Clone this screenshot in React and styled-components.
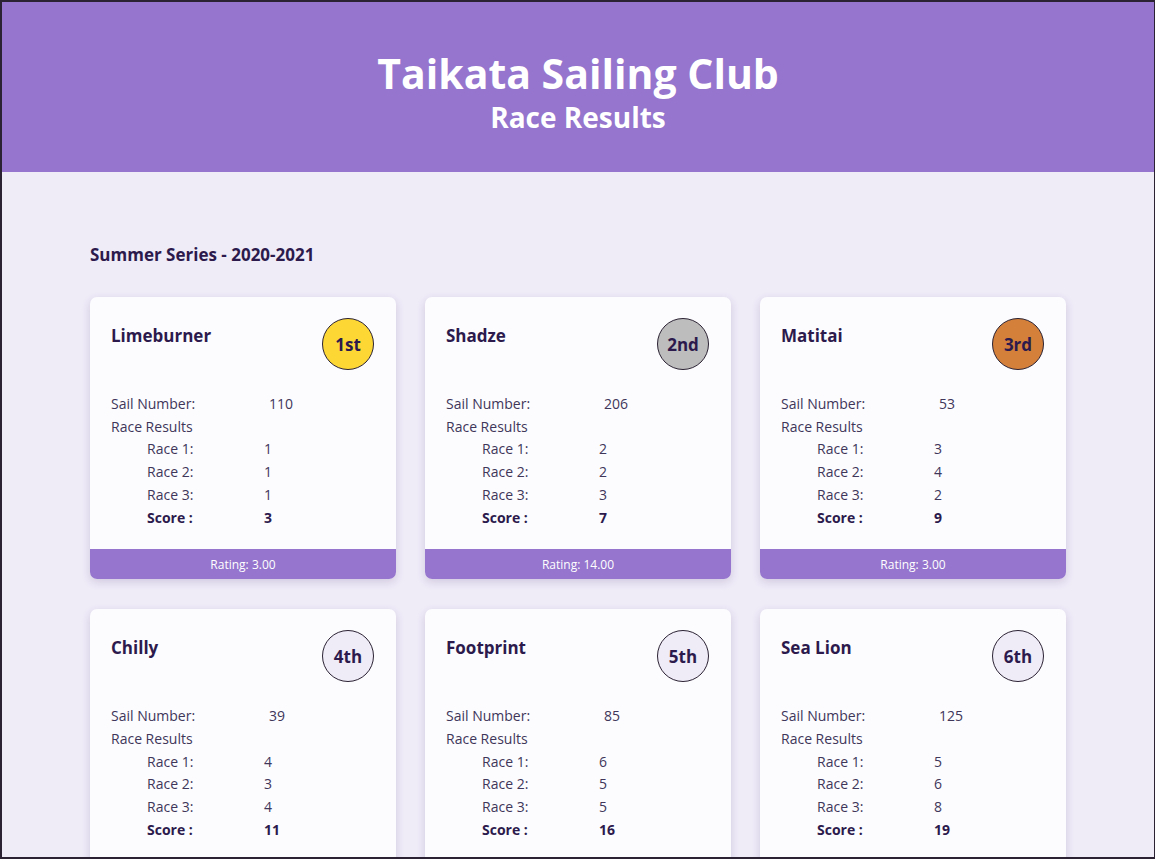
import styled, { createGlobalStyle } from "styled-components";

const GlobalStyle = createGlobalStyle`
  * { box-sizing: border-box; }
  html, body { margin: 0; padding: 0; }
  body {
    font-family: "Open Sans", "Noto Sans", sans-serif;
    color: #2c1a4d;
    background: #2b2233;
  }
`;

const boats = [
  { name: "Limeburner", place: "1st", sail: 110, races: [1, 1, 1], score: 3, rating: "3.00" },
  { name: "Shadze", place: "2nd", sail: 206, races: [2, 2, 3], score: 7, rating: "14.00" },
  { name: "Matitai", place: "3rd", sail: 53, races: [3, 4, 2], score: 9, rating: "3.00" },
  { name: "Chilly", place: "4th", sail: 39, races: [4, 3, 4], score: 11, rating: "3.00" },
  { name: "Footprint", place: "5th", sail: 85, races: [6, 5, 5], score: 16, rating: "3.00" },
  { name: "Sea Lion", place: "6th", sail: 125, races: [5, 6, 8], score: 19, rating: "3.00" },
];

const medal = {
  "1st": "#fdd835",
  "2nd": "#bdbdbd",
  "3rd": "#d4803a",
};

const Frame = styled.div`
  position: fixed;
  inset: 0;
  border-style: solid;
  border-color: #2b2233;
  border-width: 2px 1px 2px 2px;
  background: #efebf7;
  overflow: hidden;
`;

const Header = styled.header`
  height: 170px;
  background: #9575cd;
  color: #fff;
  display: flex;
  flex-direction: column;
  align-items: center;
  justify-content: center;
  padding-top: 9px;
`;

const Title = styled.h1`
  margin: 0;
  font-size: 41px;
  line-height: 50px;
  font-weight: 700;
`;

const Subtitle = styled.h2`
  margin: 0;
  font-size: 28px;
  line-height: 38px;
  font-weight: 700;
`;

const Main = styled.main`
  max-width: 976px;
  margin: 0 auto;
  padding-top: 71px;
`;

const SeriesTitle = styled.h3`
  margin: 0 0 30px;
  font-size: 17px;
  line-height: 24px;
  font-weight: 700;
`;

const Grid = styled.div`
  display: grid;
  grid-template-columns: repeat(3, 306px);
  justify-content: space-between;
  row-gap: 30px;
`;

const Card = styled.div`
  background: #fcfcfe;
  border-radius: 7px;
  box-shadow: 0 3px 8px rgba(70, 50, 120, 0.18);
  overflow: hidden;
  display: flex;
  flex-direction: column;
`;

const CardBody = styled.div`
  padding: 21px 22px 20px 21px;
`;

const CardHead = styled.div`
  display: flex;
  justify-content: space-between;
  align-items: flex-start;
  margin-bottom: 23px;
`;

const BoatName = styled.div`
  font-size: 17px;
  font-weight: 700;
  line-height: 24px;
  padding-top: 6px;
`;

const Badge = styled.div`
  width: 52px;
  height: 52px;
  border-radius: 50%;
  border: 1px solid #2b2233;
  background: ${(p) => p.$color || "#efebf7"};
  display: flex;
  align-items: center;
  justify-content: center;
  font-size: 17px;
  font-weight: 700;
  color: #2c1a4d;
`;

const Row = styled.div`
  display: flex;
  font-size: 14px;
  line-height: 22.7px;
  color: #40365a;
  padding-left: ${(p) => (p.$indent ? "36px" : "0")};
  font-weight: ${(p) => (p.$bold ? 700 : 400)};
  ${(p) => p.$bold && "color: #2c1a4d;"}
`;

const Label = styled.span`
  width: ${(p) => p.$width || "117px"};
  flex-shrink: 0;
`;

const Footer = styled.div`
  height: 30px;
  background: #9575cd;
  color: #fff;
  font-size: 12px;
  display: flex;
  align-items: center;
  justify-content: center;
`;

function BoatCard({ boat }) {
  return (
    <Card>
      <CardBody>
        <CardHead>
          <BoatName>{boat.name}</BoatName>
          <Badge $color={medal[boat.place]}>{boat.place}</Badge>
        </CardHead>
        <Row>
          <Label $width="158px">Sail Number:</Label>
          <span>{boat.sail}</span>
        </Row>
        <Row>Race Results</Row>
        {boat.races.map((r, i) => (
          <Row $indent key={i}>
            <Label>Race {i + 1}:</Label>
            <span>{r}</span>
          </Row>
        ))}
        <Row $indent $bold>
          <Label>Score :</Label>
          <span>{boat.score}</span>
        </Row>
      </CardBody>
      <Footer>Rating: {boat.rating}</Footer>
    </Card>
  );
}

export default function App() {
  return (
    <Frame>
      <GlobalStyle />
      <Header>
        <Title>Taikata Sailing Club</Title>
        <Subtitle>Race Results</Subtitle>
      </Header>
      <Main>
        <SeriesTitle>Summer Series - 2020-2021</SeriesTitle>
        <Grid>
          {boats.map((b) => (
            <BoatCard key={b.name} boat={b} />
          ))}
        </Grid>
      </Main>
    </Frame>
  );
}
